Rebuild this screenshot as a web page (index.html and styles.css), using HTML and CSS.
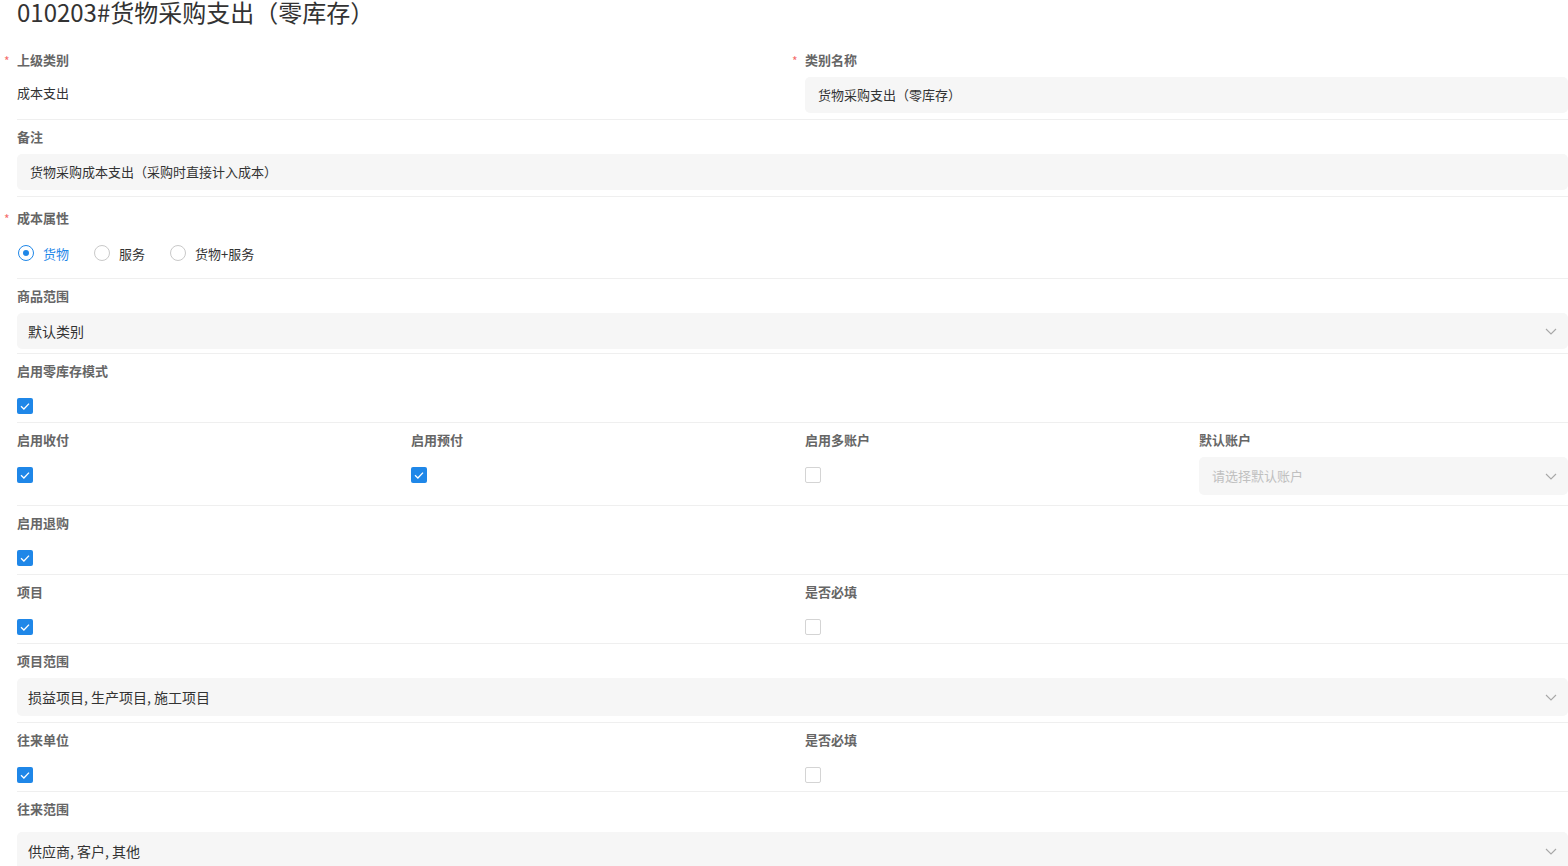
FILE: index.html
```html
<!DOCTYPE html>
<html lang="zh-CN">
<head>
<meta charset="utf-8">
<title>010203#货物采购支出（零库存）</title>
<link rel="stylesheet" href="styles.css">
</head>
<body>
<div class="page">
  <h1 class="title">010203#货物采购支出（零库存）</h1>

  <div class="row row-first">
    <div class="field span2">
      <div class="label required">上级类别</div>
      <div class="static">成本支出</div>
    </div>
    <div class="field span2">
      <div class="label required">类别名称</div>
      <div class="input">货物采购支出（零库存）</div>
    </div>
  </div>

  <div class="row row-note">
    <div class="field span4">
      <div class="label">备注</div>
      <div class="input">货物采购成本支出（采购时直接计入成本）</div>
    </div>
  </div>

  <div class="row row-radio">
    <div class="field span4">
      <div class="label required">成本属性</div>
      <div class="radios">
        <label class="radio checked"><span class="dot"></span>货物</label>
        <label class="radio"><span class="dot"></span>服务</label>
        <label class="radio"><span class="dot"></span>货物+服务</label>
      </div>
    </div>
  </div>

  <div class="row row-tight">
    <div class="field span4">
      <div class="label">商品范围</div>
      <div class="input select value">默认类别<svg class="arrow" viewBox="0 0 12 7" width="12" height="7"><path d="M1 1 L6 6 L11 1" fill="none" stroke="#a8a8a8" stroke-width="1.1"/></svg></div>
    </div>
  </div>

  <div class="row">
    <div class="field span4">
      <div class="label">启用零库存模式</div>
      <div class="check-wrap"><span class="cb on"><svg viewBox="0 0 16 16" width="16" height="16"><path d="M4 8.3 L6.9 11 L12 5.6" fill="none" stroke="#fff" stroke-width="1.3"/></svg></span></div>
    </div>
  </div>

  <div class="row row-mixed">
    <div class="field">
      <div class="label">启用收付</div>
      <div class="check-wrap"><span class="cb on"><svg viewBox="0 0 16 16" width="16" height="16"><path d="M4 8.3 L6.9 11 L12 5.6" fill="none" stroke="#fff" stroke-width="1.3"/></svg></span></div>
    </div>
    <div class="field">
      <div class="label">启用预付</div>
      <div class="check-wrap"><span class="cb on"><svg viewBox="0 0 16 16" width="16" height="16"><path d="M4 8.3 L6.9 11 L12 5.6" fill="none" stroke="#fff" stroke-width="1.3"/></svg></span></div>
    </div>
    <div class="field">
      <div class="label">启用多账户</div>
      <div class="check-wrap"><span class="cb"></span></div>
    </div>
    <div class="field">
      <div class="label">默认账户</div>
      <div class="input select tall placeholder">请选择默认账户<svg class="arrow" viewBox="0 0 12 7" width="12" height="7"><path d="M1 1 L6 6 L11 1" fill="none" stroke="#a8a8a8" stroke-width="1.1"/></svg></div>
    </div>
  </div>

  <div class="row">
    <div class="field span4">
      <div class="label">启用退购</div>
      <div class="check-wrap"><span class="cb on"><svg viewBox="0 0 16 16" width="16" height="16"><path d="M4 8.3 L6.9 11 L12 5.6" fill="none" stroke="#fff" stroke-width="1.3"/></svg></span></div>
    </div>
  </div>

  <div class="row">
    <div class="field span2">
      <div class="label">项目</div>
      <div class="check-wrap"><span class="cb on"><svg viewBox="0 0 16 16" width="16" height="16"><path d="M4 8.3 L6.9 11 L12 5.6" fill="none" stroke="#fff" stroke-width="1.3"/></svg></span></div>
    </div>
    <div class="field span2">
      <div class="label">是否必填</div>
      <div class="check-wrap"><span class="cb"></span></div>
    </div>
  </div>

  <div class="row row-scope">
    <div class="field span4">
      <div class="label">项目范围</div>
      <div class="input select tall value">损益项目, 生产项目, 施工项目<svg class="arrow" viewBox="0 0 12 7" width="12" height="7"><path d="M1 1 L6 6 L11 1" fill="none" stroke="#a8a8a8" stroke-width="1.1"/></svg></div>
    </div>
  </div>

  <div class="row">
    <div class="field span2">
      <div class="label">往来单位</div>
      <div class="check-wrap"><span class="cb on"><svg viewBox="0 0 16 16" width="16" height="16"><path d="M4 8.3 L6.9 11 L12 5.6" fill="none" stroke="#fff" stroke-width="1.3"/></svg></span></div>
    </div>
    <div class="field span2">
      <div class="label">是否必填</div>
      <div class="check-wrap"><span class="cb"></span></div>
    </div>
  </div>

  <div class="row row-last">
    <div class="field span4">
      <div class="label">往来范围</div>
      <div class="input select tall value">供应商, 客户, 其他<svg class="arrow" viewBox="0 0 12 7" width="12" height="7"><path d="M1 1 L6 6 L11 1" fill="none" stroke="#a8a8a8" stroke-width="1.1"/></svg></div>
    </div>
  </div>
</div>
</body>
</html>
```

FILE: styles.css
```css
html, body {
  margin: 0;
  padding: 0;
  background: #fff;
  overflow: hidden;
}
body {
  font-family: "Noto Sans CJK SC", "Noto Sans", sans-serif;
  font-size: 13px;
  color: #333;
}
.page {
  width: 1551px;
  padding-left: 17px;
}
.title {
  margin: 0;
  height: 43px;
  font-size: 24px;
  line-height: 24px;
  font-weight: normal;
  color: #333;
}
.row {
  display: grid;
  grid-template-columns: repeat(4, 1fr);
  column-gap: 25px;
  padding: 7px 0 5px;
  border-bottom: 1px solid #efefef;
}
.row-first { padding-bottom: 6px; }
.row-note { padding-bottom: 6px; }
.row-radio { padding: 11px 0 7px; }
.row-tight { padding-bottom: 4px; }
.row-mixed { padding-bottom: 10px; }
.row-scope { padding-bottom: 6px; }
.row-last { border-bottom: none; }
.row-last .input { margin-top: 6px; }

.field { display: flex; flex-direction: column; min-width: 0; }
.span2 { grid-column: span 2; }
.span4 { grid-column: span 4; }

.label {
  position: relative;
  height: 20px;
  line-height: 20px;
  font-weight: bold;
  color: #666;
  margin-bottom: 7px;
}
.label.required::before {
  content: "*";
  position: absolute;
  left: -13px;
  top: 1px;
  color: #f56c6c;
  font-weight: normal;
  font-size: 12px;
}
.static {
  height: 36px;
  line-height: 32px;
}
.input {
  position: relative;
  height: 36px;
  line-height: 36px;
  background: #f6f6f6;
  border-radius: 5px;
  padding: 0 13px;
  color: #333;
  white-space: nowrap;
  overflow: hidden;
}
.select { padding-left: 11px; }
.select.value { font-size: 14px; }
.select.placeholder { padding-left: 13px; color: #c0c0c0; }
.tall { height: 38px; line-height: 38px; }
.arrow {
  position: absolute;
  right: 11px;
  top: 50%;
  margin-top: -3px;
}

.radios {
  display: flex;
  align-items: center;
  height: 36px;
  gap: 25px;
  padding-left: 1px;
}
.radio {
  display: flex;
  align-items: center;
  gap: 9px;
  color: #333;
}
.radio .dot {
  box-sizing: border-box;
  width: 16px;
  height: 16px;
  border-radius: 50%;
  border: 1px solid #c9c9c9;
  background: #fff;
  position: relative;
}
.radio.checked { color: #1f87e8; }
.radio.checked .dot { border-color: #1f87e8; }
.radio.checked .dot::after {
  content: "";
  position: absolute;
  left: 4px;
  top: 4px;
  width: 6px;
  height: 6px;
  border-radius: 50%;
  background: #1f87e8;
}

.check-wrap {
  padding: 10px 0 3px;
  height: 16px;
}
.cb {
  display: block;
  box-sizing: border-box;
  width: 16px;
  height: 16px;
  border-radius: 2px;
  border: 1px solid #d4d4d4;
  background: #fff;
}
.cb.on {
  border: none;
  background: #1f87e8;
}
.cb svg { display: block; }
```
